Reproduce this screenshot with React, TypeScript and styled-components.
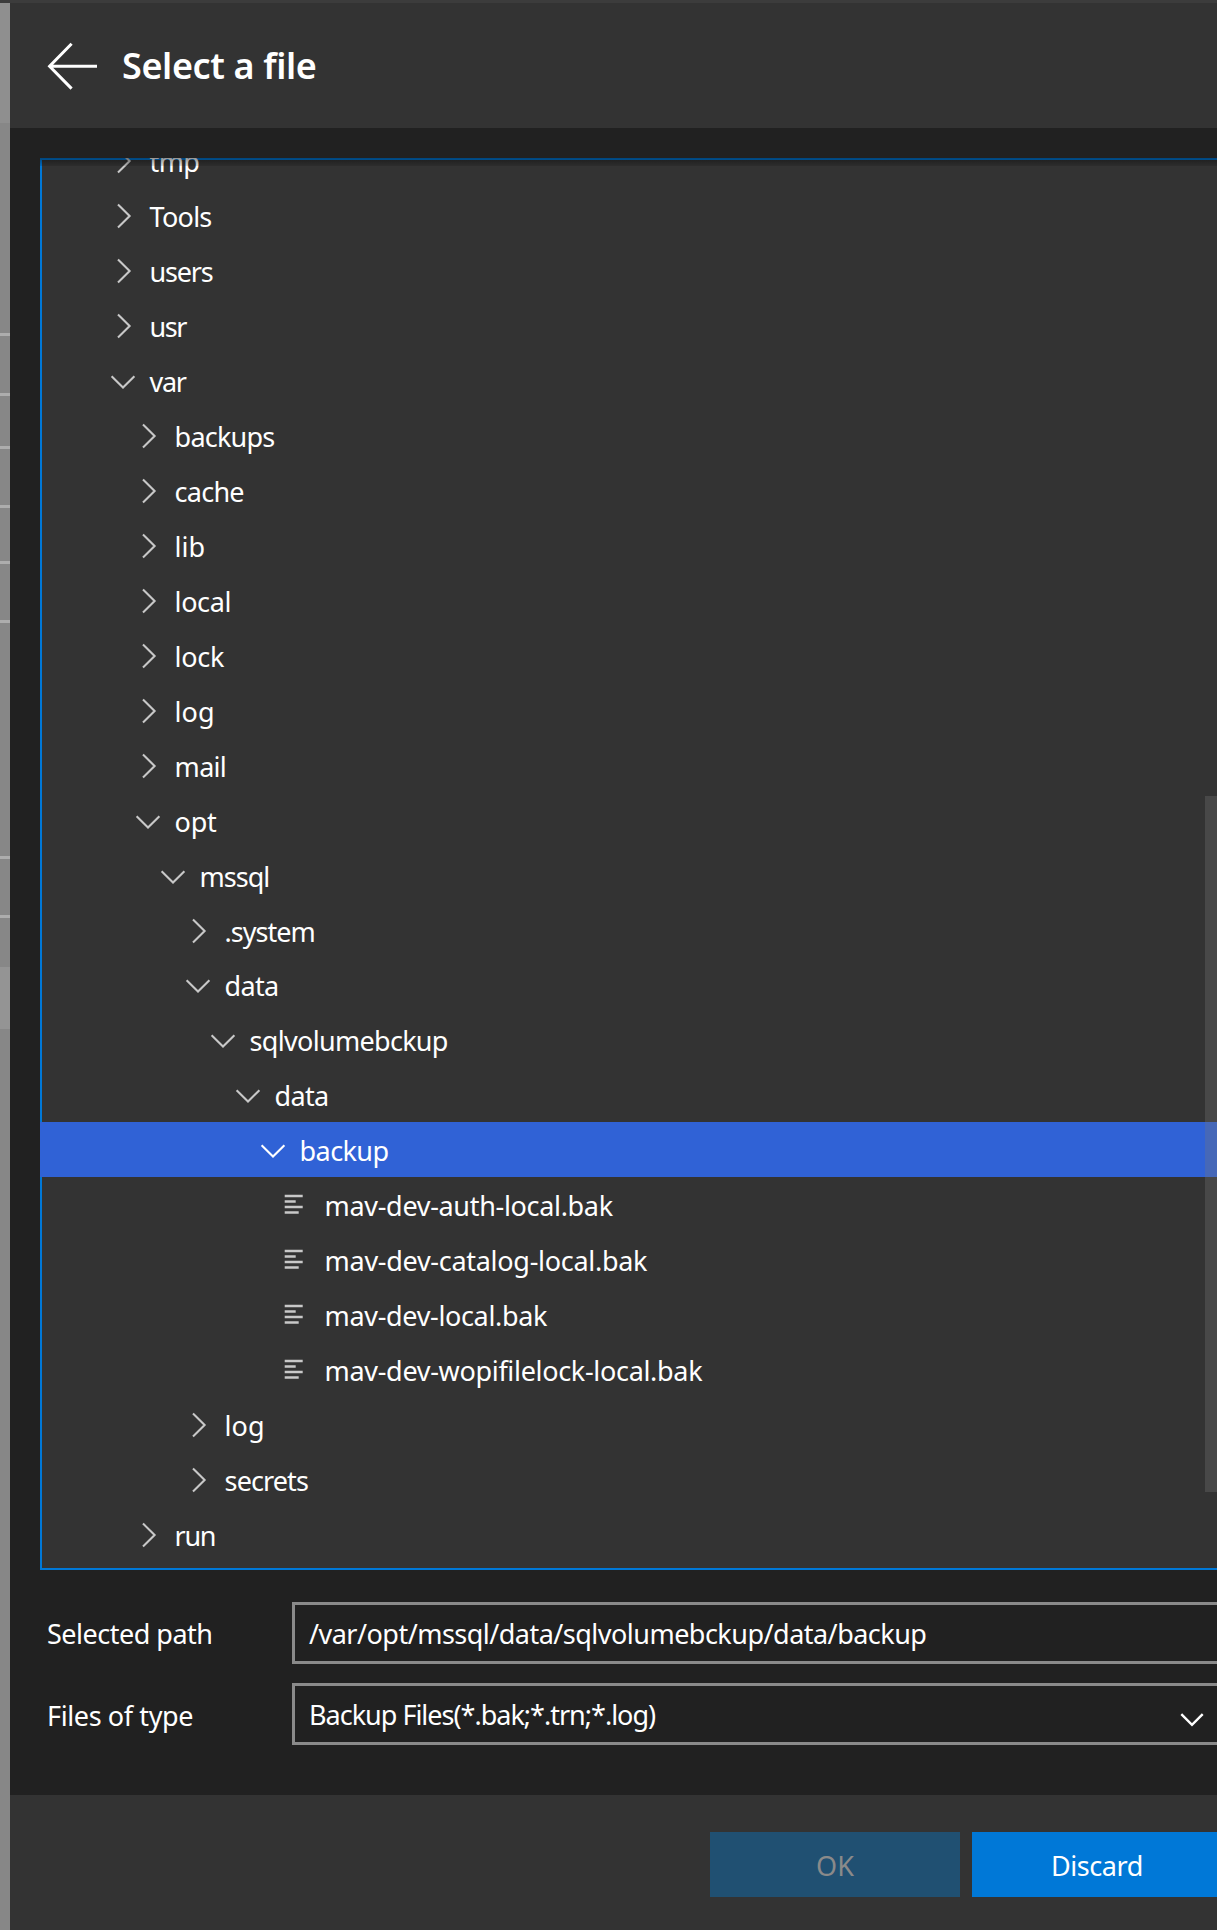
import React from "react";
import styled, { createGlobalStyle } from "styled-components";

const GlobalStyle = createGlobalStyle`
  * { box-sizing: border-box; }
  html, body { margin: 0; background: #212121; }
  body {
    font-family: "Segoe UI", "Noto Sans", "Open Sans", sans-serif;
    font-size: 27px;
    color: #fff;
    overflow: hidden;
  }
`;

const Page = styled.div`
  width: 1217px;
  height: 1930px;
  display: flex;
  border-top: 3px solid #3c3c3c;
  overflow: hidden;
`;

/* Dimmed strip of the page that sits behind the blade */
const Backdrop = styled.div`
  width: 10px;
  flex: none;
  display: flex;
  flex-direction: column;
`;

const BackdropBand = styled.div<{ $h: number; $tone: string }>`
  flex: none;
  height: ${(p) => p.$h}px;
  background: ${(p) => p.$tone};
`;

const Blade = styled.div`
  flex: 1;
  min-width: 0;
  display: flex;
  flex-direction: column;
  background: #212121;
`;

const Header = styled.header`
  height: 125px;
  flex: none;
  display: flex;
  align-items: center;
  gap: 24px;
  padding-left: 37px;
  background: #333;
`;

const BackButton = styled.button`
  padding: 0;
  border: 0;
  background: none;
  display: flex;
`;

const Title = styled.h1`
  margin: 0;
  font-size: 36px;
  font-weight: 600;
  letter-spacing: -0.38px;
`;

const Tree = styled.div`
  position: relative;
  flex: none;
  height: 1412px;
  margin: 30px 0 0 30px;
  background: #333;
  box-shadow: inset 2px 2px 0 #0078d7, inset 0 -2px 0 #0078d7;
  overflow: hidden;
`;

const TreeRows = styled.div`
  margin-top: -25px;
`;

const TreeRow = styled.div<{ $level: number; $h: number; $selected: boolean }>`
  display: flex;
  gap: 14.6px;
  height: ${(p) => p.$h}px;
  padding-left: ${(p) => 71 + p.$level * 25}px;
  background: ${(p) => (p.$selected ? "#3062d6" : "transparent")};
  color: ${(p) => (p.$selected ? "#fff" : "#c8c8c8")};
`;

const Glyph = styled.svg`
  flex: none;
  width: 24px;
  height: 55px;
  overflow: visible;
  fill: none;
  stroke: currentColor;
`;

const RowLabel = styled.span<{ $track: number }>`
  color: #fff;
  line-height: 57px;
  white-space: pre;
  letter-spacing: ${(p) => p.$track}px;
`;

const ScrollShadow = styled.div`
  position: absolute;
  top: 0;
  left: 0;
  right: 0;
  height: 8px;
  background: linear-gradient(rgba(0, 0, 0, 0.42), rgba(0, 0, 0, 0.12));
`;

const ScrollThumb = styled.div`
  position: absolute;
  top: 638px;
  right: 0;
  width: 12px;
  height: 696px;
  background: rgba(121, 121, 121, 0.31);
`;

const Form = styled.div`
  flex: 1;
  display: flex;
  flex-direction: column;
  gap: 19px;
  padding: 32px 0 0 37px;
`;

const FormRow = styled.div`
  display: flex;
  align-items: center;
  height: 62px;
`;

const FieldLabel = styled.label<{ $track: number; $drop?: number }>`
  width: 245px;
  flex: none;
  padding-top: ${(p) => p.$drop ?? 0}px;
  white-space: pre;
  letter-spacing: ${(p) => p.$track}px;
`;

const Field = styled.div<{ $track: number }>`
  flex: 1;
  height: 62px;
  display: flex;
  align-items: center;
  justify-content: space-between;
  padding: 0 13px 0 14px;
  border: 3px solid #8a8a8a;
  border-right: 0;
  white-space: pre;
  letter-spacing: ${(p) => p.$track}px;
`;

const SelectArrow = styled.svg`
  width: 24px;
  height: 14px;
  margin-top: 11px;
  fill: none;
  stroke: #fff;
  stroke-width: 2.4;
`;

const Footer = styled.footer`
  height: 135px;
  flex: none;
  display: flex;
  gap: 12px;
  padding: 37px 0 0 700px;
  background: #333;
`;

const Button = styled.button<{ $primary?: boolean }>`
  flex: none;
  width: 250px;
  height: 65px;
  padding: 2px 0 0;
  border: 0;
  font: inherit;
  letter-spacing: ${(p) => (p.$primary ? -0.45 : 0)}px;
  color: ${(p) => (p.$primary ? "#fff" : "#8a8a8a")};
  background: ${(p) => (p.$primary ? "#0078d7" : "#205072")};
`;

type Kind = "open" | "closed" | "file";

interface Node {
  name: string;
  level: number;
  kind: Kind;
  track: number;
  height?: number;
  selected?: boolean;
}

const nodes: Node[] = [
  { name: "tmp", level: 0, kind: "closed", track: -0.7 },
  { name: "Tools", level: 0, kind: "closed", track: -0.75 },
  { name: "users", level: 0, kind: "closed", track: -1.2 },
  { name: "usr", level: 0, kind: "closed", track: -1.5 },
  { name: "var", level: 0, kind: "open", track: -1.4 },
  { name: "backups", level: 1, kind: "closed", track: -0.8 },
  { name: "cache", level: 1, kind: "closed", track: -0.75 },
  { name: "lib", level: 1, kind: "closed", track: 0 },
  { name: "local", level: 1, kind: "closed", track: -0.4 },
  { name: "lock", level: 1, kind: "closed", track: -0.3 },
  { name: "log", level: 1, kind: "closed", track: 0 },
  { name: "mail", level: 1, kind: "closed", track: -0.7 },
  { name: "opt", level: 1, kind: "open", track: -0.3 },
  { name: "mssql", level: 2, kind: "open", track: -1 },
  { name: ".system", level: 3, kind: "closed", track: -1 },
  { name: "data", level: 3, kind: "open", track: -0.7 },
  { name: "sqlvolumebckup", level: 4, kind: "open", track: -0.7 },
  { name: "data", level: 5, kind: "open", track: -0.7 },
  { name: "backup", level: 6, kind: "open", track: -0.6, selected: true },
  { name: "mav-dev-auth-local.bak", level: 7, kind: "file", track: -0.32 },
  { name: "mav-dev-catalog-local.bak", level: 7, kind: "file", track: -0.29 },
  { name: "mav-dev-local.bak", level: 7, kind: "file", track: -0.34 },
  { name: "mav-dev-wopifilelock-local.bak", level: 7, kind: "file", track: -0.32 },
  { name: "log", level: 3, kind: "closed", track: 0 },
  { name: "secrets", level: 3, kind: "closed", track: -0.9 },
  { name: "run", level: 1, kind: "closed", track: -1.3 },
].map((n) => (n.name === ".system" ? { ...n, height: 54 } : n)) as Node[];

const glyphPaths: Record<Kind, { d: string; width: number }> = {
  open: { d: "M0.6 23.2 L12 34.6 L23.4 23.2", width: 2.1 },
  closed: { d: "M7 16.6 L18.6 28 L7 39.4", width: 2.1 },
  file: { d: "M-1.3 19 H16.7 M-1.3 24.5 H9.7 M-1.3 30 H16.7 M-1.3 35.5 H12.7", width: 2.5 },
};

const bands: [number, string][] = [
  [120, "#8f8f8f"],
  [210, "#878787"],
  [3, "#adadad"],
  [57, "#878787"],
  [3, "#adadad"],
  [50, "#878787"],
  [3, "#adadad"],
  [56, "#878787"],
  [3, "#adadad"],
  [53, "#878787"],
  [3, "#adadad"],
  [56, "#878787"],
  [3, "#adadad"],
  [233, "#878787"],
  [3, "#adadad"],
  [56, "#878787"],
  [3, "#adadad"],
  [49, "#878787"],
  [62, "#949494"],
  [901, "#878787"],
];

export default function App() {
  return (
    <>
      <GlobalStyle />
      <Page>
        <Backdrop>
          {bands.map(([h, tone], i) => (
            <BackdropBand key={i} $h={h} $tone={tone} />
          ))}
        </Backdrop>
        <Blade>
          <Header>
            <BackButton aria-label="Back">
              <svg width="51" height="48" viewBox="0 0 51 48" fill="none" stroke="#fff" strokeWidth="3">
                <path d="M24.6 1.8 L2.6 24.3 L24.6 46.6 M2.6 24.3 H50" />
              </svg>
            </BackButton>
            <Title>Select a file</Title>
          </Header>

          <Tree role="tree">
            <TreeRows>
              {nodes.map((n, i) => (
                <TreeRow key={i} role="treeitem" $level={n.level} $h={n.height ?? 55} $selected={!!n.selected}>
                  <Glyph viewBox="0 0 24 55" strokeWidth={glyphPaths[n.kind].width}>
                    <path d={glyphPaths[n.kind].d} />
                  </Glyph>
                  <RowLabel $track={n.track}>{n.name}</RowLabel>
                </TreeRow>
              ))}
            </TreeRows>
            <ScrollShadow />
            <ScrollThumb />
          </Tree>

          <Form>
            <FormRow>
              <FieldLabel $track={-0.5}>Selected path</FieldLabel>
              <Field $track={-0.52}>/var/opt/mssql/data/sqlvolumebckup/data/backup</Field>
            </FormRow>
            <FormRow>
              <FieldLabel $track={-0.38} $drop={2}>Files of type</FieldLabel>
              <Field $track={-1}>
                Backup Files(*.bak;*.trn;*.log)
                <SelectArrow viewBox="0 0 24 14">
                  <path d="M1.3 1.2 L12 11.8 L22.7 1.2" />
                </SelectArrow>
              </Field>
            </FormRow>
          </Form>

          <Footer>
            <Button disabled>OK</Button>
            <Button $primary>Discard</Button>
          </Footer>
        </Blade>
      </Page>
    </>
  );
}
